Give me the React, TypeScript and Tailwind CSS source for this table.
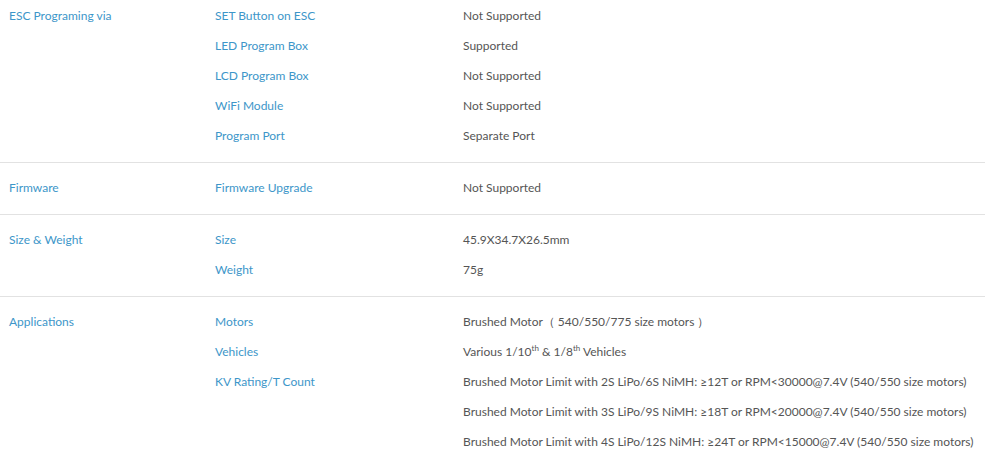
import React from "react";

type Row = { k: string; v: React.ReactNode };
type Section = { title: string; rows: Row[] };

const sections: Section[] = [
  {
    title: "ESC Programing via",
    rows: [
      { k: "SET Button on ESC", v: "Not Supported" },
      { k: "LED Program Box", v: "Supported" },
      { k: "LCD Program Box", v: "Not Supported" },
      { k: "WiFi Module", v: "Not Supported" },
      { k: "Program Port", v: "Separate Port" },
    ],
  },
  { title: "Firmware", rows: [{ k: "Firmware Upgrade", v: "Not Supported" }] },
  {
    title: "Size & Weight",
    rows: [
      { k: "Size", v: "45.9X34.7X26.5mm" },
      { k: "Weight", v: "75g" },
    ],
  },
  {
    title: "Applications",
    rows: [
      { k: "Motors", v: "Brushed Motor（ 540/550/775 size motors ）" },
      {
        k: "Vehicles",
        v: (
          <>
            Various 1/10<sup className="text-[8px] -top-[5px]">th</sup> &amp; 1/8
            <sup className="text-[8px] -top-[5px]">th</sup> Vehicles
          </>
        ),
      },
      { k: "KV Rating/T Count", v: "Brushed Motor Limit with 2S LiPo/6S NiMH: ≥12T or RPM<30000@7.4V (540/550 size motors)" },
      { k: "", v: "Brushed Motor Limit with 3S LiPo/9S NiMH: ≥18T or RPM<20000@7.4V (540/550 size motors)" },
      { k: "", v: "Brushed Motor Limit with 4S LiPo/12S NiMH: ≥24T or RPM<15000@7.4V (540/550 size motors)" },
    ],
  },
];

export default function App() {
  return (
    <div
      className="w-[1000px] h-[460px] overflow-hidden bg-white"
      style={{ fontFamily: "Lato, 'Open Sans', sans-serif" }}
    >
      <div className="w-[985px] -mt-[9px]">
        {sections.map((s, i) => (
          <div
            key={i}
            className={`flex pt-[10px] pb-[11px] ${i < sections.length - 1 ? "border-b border-[#e2e2e2]" : ""}`}
          >
            <div className="w-[215px] shrink-0 pl-[9px] h-[30px] flex items-center text-[12px] text-[#3d96c9]">
              {s.title}
            </div>
            <div className="flex flex-col">
              {s.rows.map((r, j) => (
                <div key={j} className="flex h-[30px] items-center text-[12px]">
                  <div className="w-[248px] shrink-0 text-[#3d96c9]">{r.k}</div>
                  <div className="text-[#555555] whitespace-nowrap">{r.v}</div>
                </div>
              ))}
            </div>
          </div>
        ))}
      </div>
    </div>
  );
}
